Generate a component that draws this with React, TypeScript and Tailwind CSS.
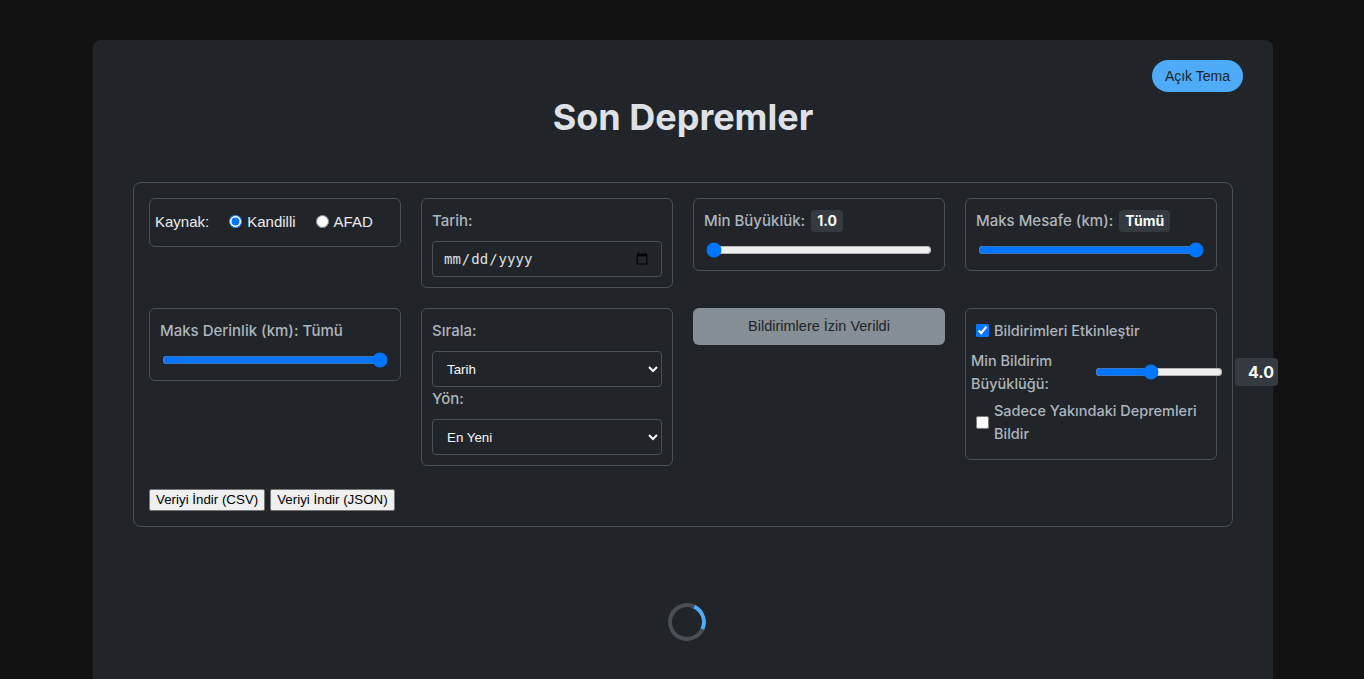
import React from "react";

const inter = { fontFamily: "Inter, 'Noto Sans', sans-serif" };
const arial = { fontFamily: "'Liberation Sans', Arial, sans-serif" };

function Card({ children, className = "" }: { children: React.ReactNode; className?: string }) {
  return (
    <div className={`rounded-[6px] border border-[#495057] ${className}`}>{children}</div>
  );
}

function Label({ children, className = "" }: { children: React.ReactNode; className?: string }) {
  return (
    <div className={`text-[15px] leading-[23px] font-medium text-[#adb5bd] ${className}`} style={inter}>
      {children}
    </div>
  );
}

function Badge({ children }: { children: React.ReactNode }) {
  return (
    <span
      className="ml-[2px] inline-block rounded-[4px] bg-[#343a40] px-[6px] text-[14px] leading-[22px] font-bold text-[#f8f9fa]"
      style={inter}
    >
      {children}
    </span>
  );
}

export default function App() {
  return (
    <div className="h-[679px] overflow-hidden bg-[#121212] pt-10">
      <div className="relative ml-[93px] h-[639px] w-[1180px] rounded-t-lg bg-[#212529] px-10">
        <button
          className="absolute right-[30px] top-5 h-[32px] rounded-full bg-[#4dabf7] px-[13px] text-[14px] text-[#212529]"
          style={arial}
        >
          Açık Tema
        </button>
        <h1
          className="pt-[56px] text-center text-[36px] leading-[43px] font-bold text-[#dee2e6]"
          style={inter}
        >
          Son Depremler
        </h1>

        <div className="mt-[43px] rounded-[8px] border border-[#495057] p-[15px]">
          <div className="grid grid-cols-4 items-start gap-5">
            {/* Kaynak */}
            <Card className="flex items-center px-[5px] pt-[11px] pb-[13px]">
              <div className="flex items-center text-[15px] leading-[23px] text-[#e9ecef]" style={arial}>
                <span className="mr-[15px]">Kaynak:</span>
                <label className="flex items-center">
                  <input type="radio" name="src" defaultChecked className="ml-[5px] mr-[5px] h-[13px] w-[13px]" />
                  Kandilli
                </label>
                <label className="ml-[15px] flex items-center">
                  <input type="radio" name="src" className="ml-[5px] mr-[5px] h-[13px] w-[13px]" />
                  AFAD
                </label>
              </div>
            </Card>

            {/* Tarih */}
            <Card className="p-[10px]">
              <Label>Tarih:</Label>
              <input
                type="date"
                className="mt-[9px] block h-[36px] w-full rounded-[4px] border border-[#495057] bg-[#212529] px-[10px] text-[14px] text-[#dee2e6]"
                style={{ fontFamily: "'DejaVu Sans Mono', monospace" }}
              />
            </Card>

            {/* Min Büyüklük */}
            <Card className="px-[10px] pt-[10px] pb-[12px]">
              <Label>
                Min Büyüklük: <Badge>1.0</Badge>
              </Label>
              <div className="mt-[10px] px-[2px]">
                <input type="range" min={1} max={9} step={0.1} defaultValue={1} className="m-0 block w-full" />
              </div>
            </Card>

            {/* Maks Mesafe */}
            <Card className="px-[10px] pt-[10px] pb-[12px]">
              <Label>
                Maks Mesafe (km): <Badge>Tümü</Badge>
              </Label>
              <div className="mt-[10px] px-[2px]">
                <input type="range" min={0} max={100} defaultValue={100} className="m-0 block w-full" />
              </div>
            </Card>

            {/* Maks Derinlik */}
            <Card className="px-[10px] pt-[10px] pb-[12px]">
              <Label>Maks Derinlik (km): Tümü</Label>
              <div className="mt-[10px] px-[2px]">
                <input type="range" min={0} max={100} defaultValue={100} className="m-0 block w-full" />
              </div>
            </Card>

            {/* Sırala */}
            <Card className="p-[10px]">
              <Label>Sırala:</Label>
              <select
                className="mt-[9px] block h-[36px] w-full rounded-[4px] border border-[#495057] bg-[#212529] pl-[10px] text-[13.33px] text-[#f8f9fa]"
                style={arial}
                defaultValue="Tarih"
              >
                <option>Tarih</option>
                <option>Büyüklük</option>
              </select>
              <Label>Yön:</Label>
              <select
                className="mt-[9px] block h-[36px] w-full rounded-[4px] border border-[#495057] bg-[#212529] pl-[10px] text-[13.33px] text-[#f8f9fa]"
                style={arial}
                defaultValue="En Yeni"
              >
                <option>En Yeni</option>
                <option>En Eski</option>
              </select>
            </Card>

            {/* Bildirim button */}
            <button
              disabled
              className="h-[37px] w-full rounded-[6px] bg-[#868e96] text-[14.5px] text-[#212529]"
              style={arial}
            >
              Bildirimlere İzin Verildi
            </button>

            {/* Notifications */}
            <Card className="px-[10px] pt-[10px] pb-[10px]">
              <div className="flex h-[23px] items-center text-[14.5px] font-medium text-[#adb5bd]" style={inter}>
                <input type="checkbox" defaultChecked className="mr-[5px] h-[13px] w-[13px]" />
                Bildirimleri Etkinleştir
              </div>
              <div className="-ml-[5px] mt-[7px] flex items-center">
                <div className="w-[124px] shrink-0 text-[14.5px] leading-[23px] font-medium text-[#adb5bd]" style={inter}>
                  Min Bildirim Büyüklüğü:
                </div>
                <input type="range" min={1} max={8} step={0.1} defaultValue={4} className="m-0 w-[128px] shrink-0" />
                <span
                  className="ml-[12px] inline-block h-[28px] shrink-0 rounded-[4px] bg-[#343a40] pl-[13px] pr-[4px] text-[16px] leading-[28px] font-bold text-[#f8f9fa]"
                  style={inter}
                >
                  4.0
                </span>
              </div>
              <div className="mt-[4px] mb-[4px] flex items-center text-[14.5px] leading-[23px] font-medium text-[#adb5bd]" style={inter}>
                <input type="checkbox" className="mr-[5px] h-[13px] w-[13px] shrink-0" />
                <span>Sadece Yakındaki Depremleri Bildir</span>
              </div>
            </Card>
          </div>

          <div className="mt-[23px] flex gap-[5px]">
            <button
              className="h-[22px] rounded-[2px] border border-[#767676] bg-[#efefef] px-[6px] text-[13.33px] text-black"
              style={arial}
            >
              Veriyi İndir (CSV)
            </button>
            <button
              className="h-[22px] rounded-[2px] border border-[#767676] bg-[#efefef] px-[6px] text-[13.33px] text-black"
              style={arial}
            >
              Veriyi İndir (JSON)
            </button>
          </div>
        </div>

        <div className="mt-[76px] flex justify-center pl-[8px]">
          <div className="h-[38px] w-[38px] rotate-[-20deg] rounded-full border-4 border-[#4a4f55] border-r-[#4dabf7]" />
        </div>
      </div>
    </div>
  );
}
